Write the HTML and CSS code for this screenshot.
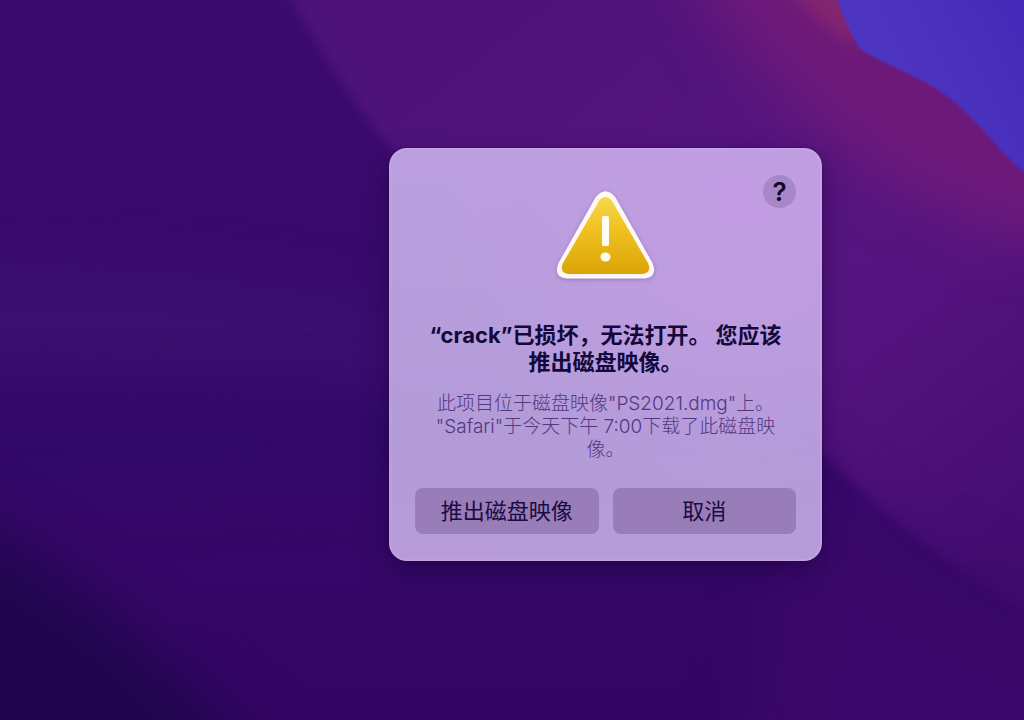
FILE: index.html
```html
<!DOCTYPE html>
<html lang="zh-CN">
<head>
<meta charset="utf-8">
<meta name="viewport" content="width=device-width, initial-scale=1">
<title>crack</title>
<link rel="stylesheet" href="styles.css">
</head>
<body>
<main class="desktop">
  <svg class="wallpaper" viewBox="0 0 1024 720" preserveAspectRatio="none" aria-hidden="true">
    <defs>
      <linearGradient id="base" x1="0" y1="0" x2="0" y2="1">
        <stop offset="0" stop-color="#3d0b6e"/>
        <stop offset="0.5" stop-color="#380a6d"/>
        <stop offset="1" stop-color="#340464"/>
      </linearGradient>
      <linearGradient id="hill" gradientUnits="userSpaceOnUse" x1="480" y1="0" x2="960" y2="600">
        <stop offset="0" stop-color="#4d137a"/>
        <stop offset="0.4" stop-color="#56157f"/>
        <stop offset="0.65" stop-color="#551480"/>
        <stop offset="1" stop-color="#430c70"/>
      </linearGradient>
      <linearGradient id="sky" gradientUnits="userSpaceOnUse" x1="870" y1="70" x2="1000" y2="0">
        <stop offset="0" stop-color="#4e36c3"/>
        <stop offset="1" stop-color="#452bb9"/>
      </linearGradient>
    </defs>
    <rect width="1024" height="720" fill="url(#base)"/>
    <path class="haze" d="M-80 280Q180 260 440 330V390Q160 360 -80 370Z" fill="#3b1070"/>
    <path class="haze" d="M-80 410Q200 390 440 410V470Q200 480 -80 510Z" fill="#310969"/>
    <path class="haze" d="M-80 500Q90 560 300 800H-80Z" fill="#20064e"/>
    <path class="ridge" d="M270 -40Q325 65 390 148L830 460Q900 540 1100 660V-40Z" fill="url(#hill)"/>
    <path class="haze" d="M800 460Q880 550 1100 640V800H740Z" fill="#3b096b"/>
    <path class="haze" d="M650 -80Q740 70 860 160T1100 245V-80Z" fill="#6d197a"/>
    <path class="glow" d="M780 -30Q805 20 858 46L880 -30Z" fill="#84256f"/>
    <path class="edge" d="M836 -5C842 16 850 32 858 46C868 60 930 77 960 107C982 126 1002 155 1030 178V-5Z" fill="url(#sky)"/>
  </svg>

  <section class="alert" role="alertdialog" aria-labelledby="alert-title" aria-describedby="alert-text">
    <button class="help" type="button" aria-label="帮助">?</button>
    <svg class="warning" viewBox="0 0 104 96" aria-hidden="true">
      <defs>
        <linearGradient id="gold" x1="0" y1="0" x2="0" y2="1">
          <stop offset="0" stop-color="#f6d84a"/>
          <stop offset="0.45" stop-color="#efc01f"/>
          <stop offset="1" stop-color="#dca407"/>
        </linearGradient>
      </defs>
      <path d="M41.500 9.500Q51.500 -3 61.500 9.500L98.500 75Q104 89 91 90.500H12Q-1 89 4.500 75Z" fill="#fdf8f4"/>
      <path d="M45 13Q51.500 5 58 13L94 75Q98 84 89.500 86H13.500Q5 84 9 75Z" fill="url(#gold)"/>
      <rect x="48" y="28" width="7" height="30" rx="1.500" fill="#fffdf4"/>
      <ellipse cx="51.500" cy="69" rx="5" ry="4.500" fill="#fffbe8"/>
    </svg>
    <h1 class="title" id="alert-title">“crack”已损坏，无法打开。 您应该<br>推出磁盘映像。</h1>
    <p class="text" id="alert-text">此项目位于磁盘映像"PS2021.dmg"上。<br>"Safari"于今天下午 7:00下载了此磁盘映<br>像。</p>
    <div class="actions">
      <button class="action" type="button">推出磁盘映像</button>
      <button class="action" type="button">取消</button>
    </div>
  </section>
</main>
</body>
</html>
```
FILE: styles.css
```css
* {
  box-sizing: border-box;
}

body {
  margin: 0;
  font-family: Inter, "Noto Sans CJK SC", sans-serif;
  background: #380a6a;
}

.desktop {
  position: relative;
  min-height: 100vh;
  overflow: hidden;
}

.wallpaper {
  position: absolute;
  inset: 0;
  width: 100%;
  height: 100%;
}

.haze {
  filter: blur(30px);
}

.ridge {
  filter: blur(5px);
}

.glow {
  filter: blur(9px);
}

.edge {
  filter: blur(1px);
}

.alert {
  position: absolute;
  left: 38%;
  top: 148px;
  width: 433px;
  padding: 40px 26px 27px;
  display: flex;
  flex-direction: column;
  align-items: center;
  border-radius: 18px;
  color: #12083a;
  text-align: center;
  background:
    radial-gradient(circle at 82% 14%, rgba(196, 156, 228, 0.8), transparent 60%),
    linear-gradient(180deg, #bb9fdf, #b39bd8 70%, #b79cd8);
  box-shadow:
    inset 0 0 3px 1px rgba(218, 184, 244, 0.5),
    0 0 2px rgba(26, 2, 60, 0.8),
    0 10px 26px rgba(24, 0, 60, 0.5);
}

.help {
  position: absolute;
  top: 27px;
  right: 26px;
  width: 33px;
  height: 33px;
  padding: 0;
  border: 0;
  border-radius: 50%;
  background: #a887c8;
  color: #10062e;
  font: 600 26px/33px Inter, sans-serif;
}

.warning {
  width: 104px;
  height: 96px;
  filter: drop-shadow(0 1px 2px rgba(90, 50, 120, 0.35));
}

.title {
  margin: 38px 0 0;
  font-size: 22px;
  line-height: 27px;
  font-weight: 700;
  white-space: nowrap;
}

.text {
  margin: 16px 0 0;
  font-size: 19px;
  line-height: 23px;
  font-weight: 300;
  color: #553782;
  white-space: nowrap;
}

.actions {
  display: grid;
  grid-template-columns: 1fr 1fr;
  gap: 14px;
  width: 100%;
  margin-top: 27px;
}

.action {
  height: 46px;
  padding: 0;
  border: 0;
  border-radius: 8px;
  background: #987db9;
  color: #1c0b42;
  font: 400 22px/44px Inter, "Noto Sans CJK SC", sans-serif;
}
```
